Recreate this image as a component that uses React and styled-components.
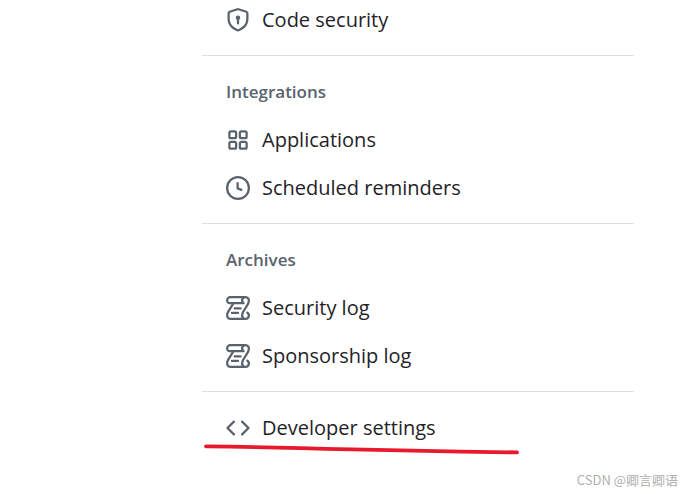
import React from "react";
import styled, { createGlobalStyle } from 'styled-components';

const GlobalStyle = createGlobalStyle`
  body {
    margin: 0;
    background: #ffffff;
    color: #1f2328;
    font-family: 'Segoe UI', 'Open Sans', sans-serif;
  }
`;

const Page = styled.div`
  display: flow-root;
`;

const Sidebar = styled.nav`
  /* the list is scrolled a little past its first row */
  margin: -4px 51px 0 202px;
`;

const Section = styled.section`
  & + & {
    margin-top: 11px;
    padding-top: 12px;
    border-top: 1px solid #dcdfe3;
  }
`;

const SectionTitle = styled.h3`
  margin: 0;
  padding: 0 24px;
  color: #59636e;
  font-size: 17px;
  font-weight: 600;
  line-height: 48px;
`;

const NavList = styled.ul`
  margin: 0;
  padding: 0;
  list-style: none;
`;

const NavItem = styled.li`
  position: relative;
`;

const NavLink = styled.a`
  display: flex;
  align-items: center;
  gap: 12px;
  height: 48px;
  padding: 0 24px;
  color: inherit;
  font-size: 20px;
  line-height: 32px;
  text-decoration: none;
`;

const Icon = styled.svg`
  flex: none;
  width: 24px;
  height: 24px;
  fill: #59636e;
`;

const Underline = styled.svg`
  position: absolute;
  top: 40px;
  left: 0;
  width: 320px;
  height: 16px;
  pointer-events: none;
`;

const Watermark = styled.footer`
  margin-top: 18px;
  padding-right: 7px;
  color: #b0b0b0;
  font-family: 'Noto Sans CJK SC', sans-serif;
  font-size: 13px;
  line-height: 20px;
  text-align: right;
`;

const icons = {
  shield: "m8.533.133 5.25 1.68A1.75 1.75 0 0 1 15 3.48V7c0 1.566-.32 3.182-1.303 4.682-.983 1.498-2.585 2.813-5.032 3.855a1.697 1.697 0 0 1-1.33 0c-2.447-1.042-4.049-2.357-5.032-3.855C1.32 10.182 1 8.566 1 7V3.48a1.755 1.755 0 0 1 1.217-1.667l5.25-1.68a1.748 1.748 0 0 1 1.066 0Zm-.61 1.429.001.001-5.25 1.68a.251.251 0 0 0-.174.237V7c0 1.36.275 2.666 1.057 3.859.784 1.194 2.121 2.342 4.366 3.298a.196.196 0 0 0 .154 0c2.245-.957 3.582-2.103 4.366-3.297C13.225 9.666 13.5 8.358 13.5 7V3.48a.25.25 0 0 0-.174-.238l-5.25-1.68a.25.25 0 0 0-.153 0ZM9.5 6.5c0 .536-.286 1.032-.75 1.3v2.45a.75.75 0 0 1-1.5 0V7.8A1.5 1.5 0 1 1 9.5 6.5Z",
  apps: "M1.5 3.25c0-.966.784-1.75 1.75-1.75h2.5c.966 0 1.75.784 1.75 1.75v2.5A1.75 1.75 0 0 1 5.75 7.5h-2.5A1.75 1.75 0 0 1 1.5 5.75Zm7 0c0-.966.784-1.75 1.75-1.75h2.5c.966 0 1.75.784 1.75 1.75v2.5a1.75 1.75 0 0 1-1.75 1.75h-2.5A1.75 1.75 0 0 1 8.5 5.75Zm-7 7c0-.966.784-1.75 1.75-1.75h2.5c.966 0 1.75.784 1.75 1.75v2.5a1.75 1.75 0 0 1-1.75 1.75h-2.5a1.75 1.75 0 0 1-1.75-1.75Zm7 0c0-.966.784-1.75 1.75-1.75h2.5c.966 0 1.75.784 1.75 1.75v2.5a1.75 1.75 0 0 1-1.75 1.75h-2.5a1.75 1.75 0 0 1-1.75-1.75ZM3.25 3a.25.25 0 0 0-.25.25v2.5c0 .138.112.25.25.25h2.5A.25.25 0 0 0 6 5.75v-2.5A.25.25 0 0 0 5.75 3Zm7 0a.25.25 0 0 0-.25.25v2.5c0 .138.112.25.25.25h2.5a.25.25 0 0 0 .25-.25v-2.5a.25.25 0 0 0-.25-.25Zm-7 7a.25.25 0 0 0-.25.25v2.5c0 .138.112.25.25.25h2.5a.25.25 0 0 0 .25-.25v-2.5a.25.25 0 0 0-.25-.25Zm7 0a.25.25 0 0 0-.25.25v2.5c0 .138.112.25.25.25h2.5a.25.25 0 0 0 .25-.25v-2.5a.25.25 0 0 0-.25-.25Z",
  clock: "M8 0a8 8 0 1 1 0 16A8 8 0 0 1 8 0ZM1.5 8a6.5 6.5 0 1 0 13 0 6.5 6.5 0 0 0-13 0Zm7-3.25v2.992l2.028.812a.75.75 0 0 1-.557 1.392l-2.5-1A.751.751 0 0 1 7 8.25v-3.5a.75.75 0 0 1 1.5 0Z",
  log: "M5 8.25a.75.75 0 0 1 .75-.75h4a.75.75 0 0 1 0 1.5h-4A.75.75 0 0 1 5 8.25ZM4 10.5A.75.75 0 0 0 4 12h4a.75.75 0 0 0 0-1.5H4ZM13-.005c1.654 0 3 1.328 3 3 0 .982-.338 1.933-.783 2.818-.443.879-1.028 1.758-1.582 2.588l-.011.017c-.568.853-1.104 1.659-1.501 2.446-.398.789-.623 1.494-.623 2.136a1.5 1.5 0 1 0 2.333-1.248.75.75 0 0 1 .834-1.246A3 3 0 0 1 13 16H3a3 3 0 0 1-3-3c0-1.582.891-3.135 1.777-4.506.209-.322.418-.637.623-.946.473-.709.923-1.386 1.287-2.048H2.51c-.576 0-1.381-.133-1.907-.783A2.68 2.68 0 0 1 0 2.995a3 3 0 0 1 3-3Zm0 1.5a1.5 1.5 0 0 0-1.5 1.5c0 .476.223.834.667 1.132A.75.75 0 0 1 11.75 5.5H5.368c-.467 1.003-1.141 2.015-1.773 2.963-.192.289-.381.571-.558.845C2.13 10.711 1.5 11.916 1.5 13A1.5 1.5 0 0 0 3 14.5h7.401A2.989 2.989 0 0 1 10 13c0-.979.338-1.928.784-2.812.441-.874 1.023-1.748 1.575-2.576l.017-.026c.568-.853 1.103-1.658 1.501-2.448.398-.79.623-1.497.623-2.143 0-.838-.669-1.5-1.5-1.5Zm-10 0a1.5 1.5 0 0 0-1.5 1.5c0 .321.1.569.27.778.097.12.325.227.74.227h7.674A2.737 2.737 0 0 1 10 2.995c0-.546.146-1.059.401-1.5Z",
  code: "m11.28 3.22 4.25 4.25a.75.75 0 0 1 0 1.06l-4.25 4.25a.749.749 0 0 1-1.275-.326.749.749 0 0 1 .215-.734L13.94 8l-3.72-3.72a.749.749 0 0 1 .326-1.275.749.749 0 0 1 .734.215Zm-6.56 0a.751.751 0 0 1 1.042.018.751.751 0 0 1 .018 1.042L2.06 8l3.72 3.72a.749.749 0 0 1-.326 1.275.749.749 0 0 1-.734-.215L.47 8.53a.75.75 0 0 1 0-1.06Z"
};

const sections = [
  { items: [{ label: 'Code security', icon: 'shield' }] },
  {
    title: 'Integrations',
    items: [
      { label: 'Applications', icon: 'apps' },
      { label: 'Scheduled reminders', icon: 'clock' }
    ]
  },
  {
    title: 'Archives',
    items: [
      { label: 'Security log', icon: 'log' },
      { label: 'Sponsorship log', icon: 'log' }
    ]
  },
  { items: [{ label: 'Developer settings', icon: 'code', marked: true }] }
];

function App() {
  return (
    <Page>
      <GlobalStyle />
      <Sidebar>
        {sections.map((section, index) => (
          <Section key={index}>
            {section.title && <SectionTitle>{section.title}</SectionTitle>}
            <NavList>
              {section.items.map((item) => (
                <NavItem key={item.label}>
                  <NavLink href="#">
                    <Icon viewBox="0 0 16 16" aria-hidden="true">
                      <path d={icons[item.icon]} />
                    </Icon>
                    {item.label}
                  </NavLink>
                  {item.marked && (
                    <Underline viewBox="0 0 320 16" aria-hidden="true">
                      <path
                        d="M4 2.3 C60 3 100 4 150 5.4 S260 7.6 315 8.4"
                        fill="none"
                        stroke="#e8192c"
                        strokeWidth="3.8"
                        strokeLinecap="round"
                      />
                    </Underline>
                  )}
                </NavItem>
              ))}
            </NavList>
          </Section>
        ))}
      </Sidebar>
      <Watermark>CSDN @卿言卿语</Watermark>
    </Page>
  );
}

export default App;
